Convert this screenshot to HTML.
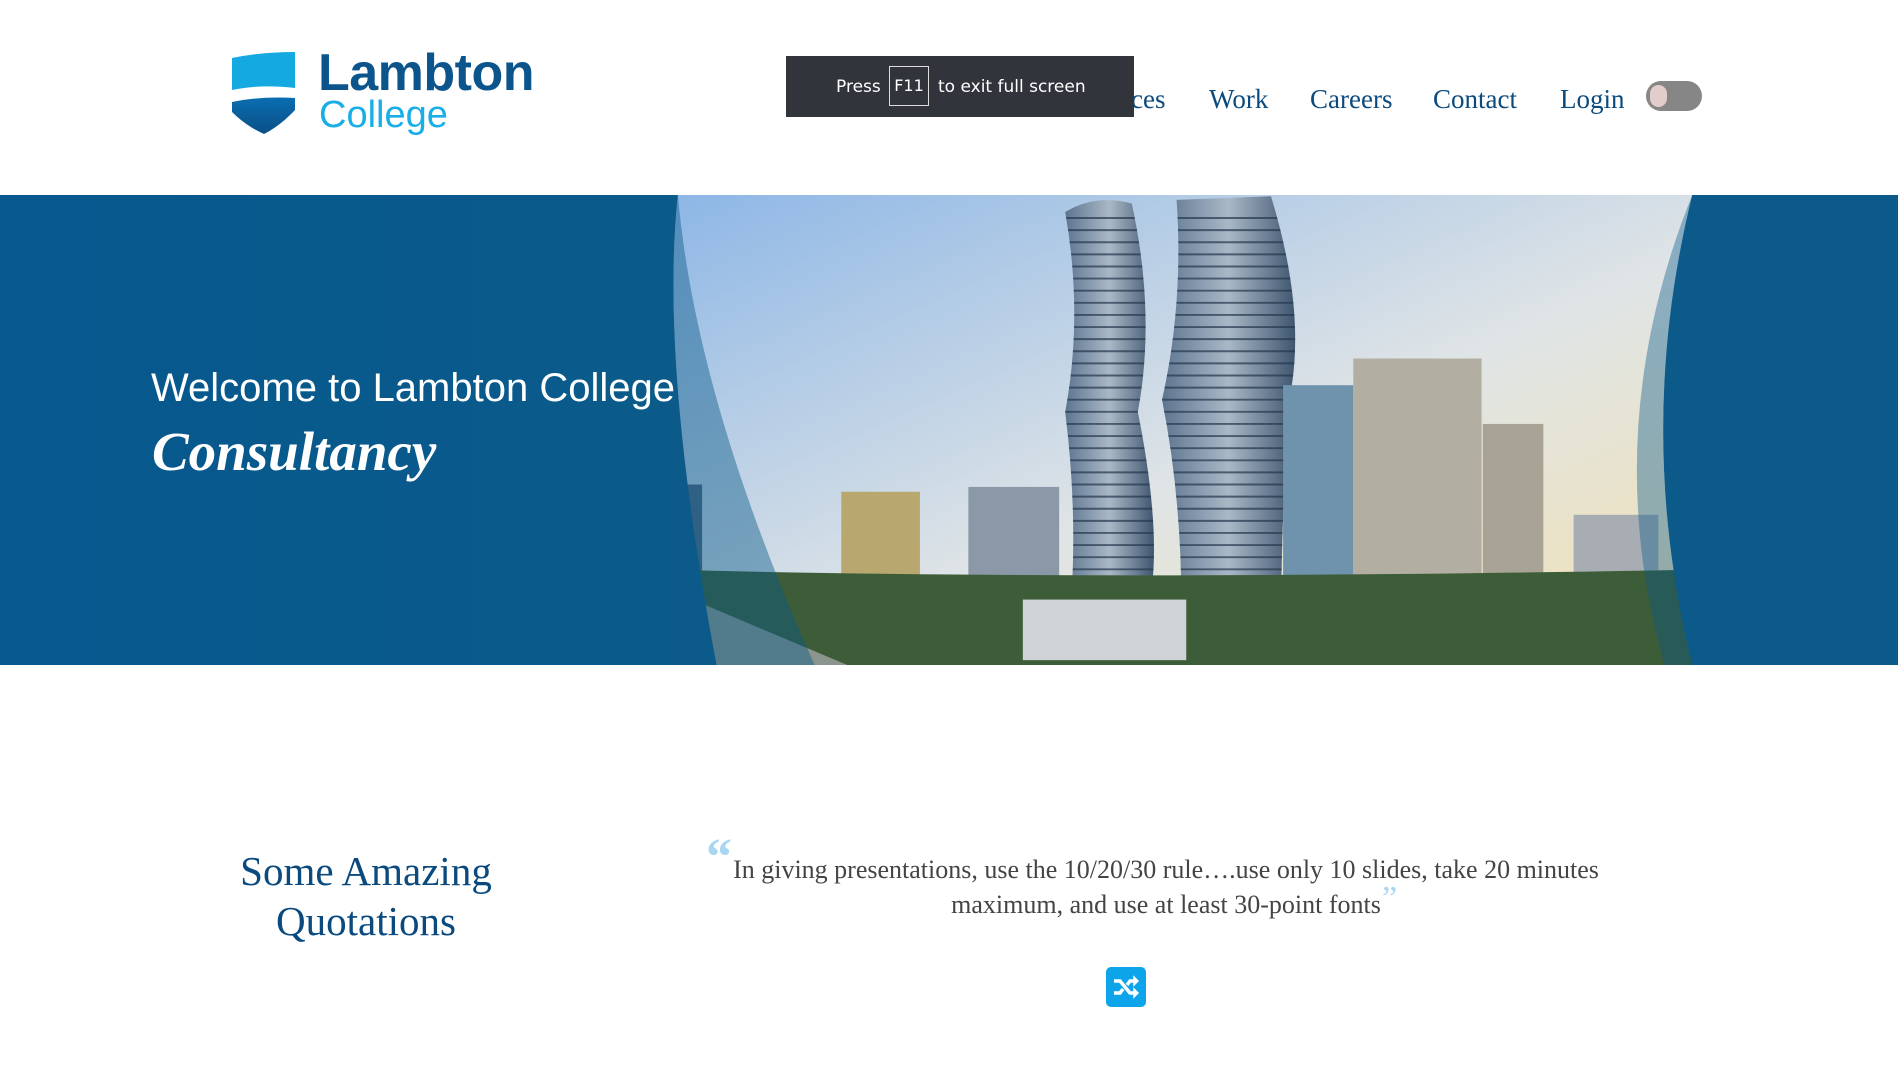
<!DOCTYPE html>
<html><head><meta charset="utf-8">
<style>
*{margin:0;padding:0;box-sizing:border-box}
body{width:1898px;height:1080px;overflow:hidden;background:#fff;position:relative;font-family:"Liberation Serif",serif}
.abs{position:absolute;white-space:nowrap}
.nav{font-size:27px;color:#0b4a7e;top:84px}
</style></head><body>
<svg class="abs" style="left:230px;top:50px" width="70" height="86" viewBox="0 0 70 86">
<defs><linearGradient id="sh" x1="0" y1="0" x2="0" y2="1"><stop offset="0" stop-color="#0a6eb0"/><stop offset="1" stop-color="#0a4f86"/></linearGradient></defs>
<path d="M2 8 Q30 2 65 2 L65 38 Q30 34 2 40 Z" fill="#14a9e0"/>
<path d="M2 52 Q30 46 65 48 L65 60 Q50 76 34 84 Q16 76 2 62 Z" fill="url(#sh)"/>
</svg>
<div class="abs" style="left:318px;top:43px;font-family:'Liberation Sans',sans-serif;font-weight:bold;font-size:52px;color:#0b558c;letter-spacing:-0.5px">Lambton</div>
<div class="abs" style="left:319px;top:94px;font-family:'Liberation Sans',sans-serif;font-size:38px;color:#1aaee6">College</div>
<div class="abs nav" style="left:1074px">Services</div>
<div class="abs nav" style="left:1209px">Work</div>
<div class="abs nav" style="left:1310px">Careers</div>
<div class="abs nav" style="left:1433px">Contact</div>
<div class="abs nav" style="left:1560px">Login</div>
<div class="abs" style="left:1646px;top:81px;width:56px;height:30px;border-radius:15px;background:#868686"></div>
<div class="abs" style="left:1650px;top:85px;width:17px;height:22px;border-radius:9px;background:#e3cccc"></div>
<div class="abs" style="left:786px;top:56px;width:348px;height:61px;background:#31343b;color:#fff;font-family:'DejaVu Sans','Liberation Sans',sans-serif;font-size:17px">
<span class="abs" style="left:50px;top:21px">Press</span>
<span class="abs" style="left:103px;top:10px;width:40px;height:40px;border:1.5px solid #ddd;text-align:center;line-height:38px;font-size:16px">F11</span>
<span class="abs" style="left:152px;top:21px">to exit full screen</span>
</div>
<svg class="abs" style="left:0;top:195px" width="1898" height="470" viewBox="0 161 1568 388" preserveAspectRatio="none">
<defs>
<linearGradient id="sky" x1="0" y1="0" x2="1" y2="1"><stop offset="0" stop-color="#8cb6e6"/><stop offset="0.55" stop-color="#dfe4e6"/><stop offset="1" stop-color="#f4e2b0"/></linearGradient>
<linearGradient id="bl" x1="0" y1="0" x2="1" y2="0"><stop offset="0" stop-color="#06588e"/><stop offset="1" stop-color="#0b5a8a"/></linearGradient>
<linearGradient id="tw" x1="0" y1="0" x2="1" y2="0"><stop offset="0" stop-color="#5d7590"/><stop offset="0.5" stop-color="#aab8c6"/><stop offset="1" stop-color="#3f5670"/></linearGradient>
<clipPath id="tc"><path d="M880 175 Q905 160 935 168 Q955 260 940 340 Q960 440 950 495 L885 495 Q890 420 880 340 Q895 260 880 175Z M972 165 L1050 162 Q1080 260 1065 330 Q1058 430 1058 545 L975 545 Q980 430 960 330 Q978 250 972 165Z"/></clipPath>
</defs>
<rect x="540" y="161" width="880" height="388" fill="url(#sky)"/>
<rect x="695" y="406" width="65" height="80" fill="#b8a870"/>
<rect x="800" y="402" width="75" height="90" fill="#8a98a8"/>
<rect x="1300" y="425" width="70" height="60" fill="#a8adb3"/>
<rect x="560" y="400" width="20" height="90" fill="#4d6680"/>
<path d="M880 175 Q905 160 935 168 Q955 260 940 340 Q960 440 950 495 L885 495 Q890 420 880 340 Q895 260 880 175Z" fill="url(#tw)"/>
<path d="M972 165 L1050 162 Q1080 260 1065 330 Q1058 430 1058 545 L975 545 Q980 430 960 330 Q978 250 972 165Z" fill="url(#tw)"/>
<g stroke="#24374c" stroke-width="1.6" opacity=".7" clip-path="url(#tc)">
<path d="M880 180 H1070 M880 190 H1070 M880 200 H1070 M880 210 H1070 M880 220 H1070 M880 230 H1070 M880 240 H1070 M880 250 H1070 M880 260 H1070 M880 270 H1070 M880 280 H1070 M880 290 H1070 M880 300 H1070 M880 310 H1070 M880 320 H1070 M880 330 H1070 M880 340 H1070 M880 350 H1070 M880 360 H1070 M880 370 H1070 M880 380 H1070 M880 390 H1070 M880 400 H1070 M880 410 H1070 M880 420 H1070 M880 430 H1070 M880 440 H1070 M880 450 H1070 M880 460 H1070 M880 470 H1070 M880 480 H1070 M880 490 H1070"/>
</g>
<rect x="1060" y="318" width="58" height="200" fill="#6f93ad"/>
<rect x="1118" y="296" width="106" height="220" fill="#b3aea2"/>
<rect x="1225" y="350" width="50" height="165" fill="#a8a394"/>
<path d="M540 470 Q900 480 1420 470 L1420 549 L540 549Z" fill="#3d5c38"/>
<rect x="845" y="495" width="135" height="50" fill="#cfd3d8"/>
<path d="M560 490 L700 549 L560 549Z" fill="#8c958d"/>
<path d="M0 161 L560 161 Q545 300 592 549 L0 549Z" fill="url(#bl)"/>
<path d="M560 161 Q575 330 673 549 L592 549 Q545 300 560 161Z" fill="#0b5a8a" opacity=".45"/>
<path d="M1398 161 Q1350 355 1398 549 L1568 549 L1568 161Z" fill="#0b5a8a"/>
<path d="M1398 161 Q1320 355 1375 549 L1398 549 Q1350 355 1398 161Z" fill="#0b5a8a" opacity=".4"/>
</svg>
<div class="abs" style="left:151px;top:366px;font-family:'Liberation Sans',sans-serif;font-size:40px;color:#fff">Welcome to Lambton College</div>
<div class="abs" style="left:152px;top:420px;font-family:'Liberation Serif',serif;font-style:italic;font-weight:bold;font-size:55px;color:#fff">Consultancy</div>
<div class="abs" style="left:186px;top:846px;width:360px;text-align:center;white-space:normal;font-size:41px;line-height:50px;color:#0b4a7e">Some Amazing<br>Quotations</div>
<div class="abs" style="left:706px;top:828px;font-size:52px;font-weight:bold;color:#a9d6f0">“</div>
<div class="abs" style="left:700px;top:852px;width:932px;text-align:center;white-space:normal;font-size:26px;line-height:35px;color:#444">In giving presentations, use the 10/20/30 rule….use only 10 slides, take 20 minutes<br>maximum, and use at least 30-point fonts</div>
<div class="abs" style="left:1382px;top:880px;font-size:34px;color:#a9d6f0">”</div>
<div class="abs" style="left:1106px;top:967px;width:40px;height:40px;border-radius:5px;background:#0ea4e9"></div>
<svg class="abs" style="left:1106px;top:967px" width="40" height="40" viewBox="0 0 40 40" fill="none" stroke="#fff" stroke-width="3.5">
<path d="M8 14 H14 L24 26 H31"/><path d="M8 26 H14 L17 22"/><path d="M21 18 L24 14 H31"/>
<path d="M28 10 L32 14 L28 18 Z M28 22 L32 26 L28 30 Z" fill="#fff" stroke-width="1.5"/>
</svg>
</body></html>
